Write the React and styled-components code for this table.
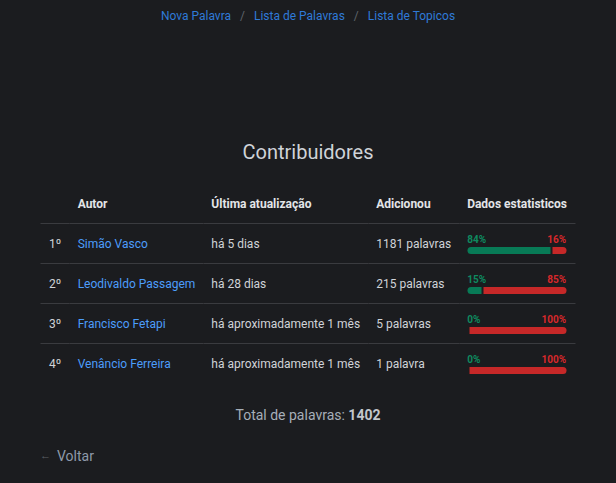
import React from 'react'
import styled, { createGlobalStyle } from 'styled-components'

const GlobalStyle = createGlobalStyle`
  html, body {
    margin: 0;
    padding: 0;
    background: #1b1c1f;
    font-family: Roboto, "Liberation Sans", Arial, sans-serif;
  }
`

const Page = styled.div`
  width: 616px;
  min-height: 483px;
  background: #1b1c1f;
  display: flex;
  flex-direction: column;
  align-items: center;
`

const Breadcrumb = styled.nav`
  display: flex;
  align-items: center;
  gap: 9px;
  padding: 7px 0 5px;
  font-size: 12px;
  line-height: 18px;
`

const Crumb = styled.a`
  color: #2f7ad8;
  text-decoration: none;
`

const Sep = styled.span`
  color: #5f646b;
`

const Title = styled.h2`
  margin: 110px 0 0;
  font-size: 20px;
  line-height: 24px;
  font-weight: 400;
  color: #cfd3d8;
`

const Table = styled.table`
  margin-top: 21px;
  width: 535px;
  border-collapse: collapse;
  font-size: 12px;
  transform: translateX(-0.5px);
`

const Th = styled.th`
  text-align: left;
  padding: 10px 8px;
  line-height: 18px;
  font-weight: 700;
  color: #e3e5e8;
  white-space: nowrap;
  border-bottom: 1px solid #3a3b3f;
`

const Tr = styled.tr`
  border-bottom: ${p => (p.$last ? 'none' : '1px solid #3a3b3f')};
`

const Td = styled.td`
  padding: 0 8px;
  height: 39px;
  line-height: 18px;
  color: #d0d3d8;
  white-space: nowrap;
  padding-left: ${p => p.$pl || '8px'};
`

const Author = styled.a`
  color: #4c9dfb;
  text-decoration: none;
`

const Stats = styled.div`
  display: flex;
  flex-direction: column;
  gap: 2px;
  width: 99px;
  margin-top: 1px;
`

const Labels = styled.div`
  display: flex;
  justify-content: space-between;
  font-size: 10px;
  line-height: 11px;
  font-weight: 700;
`

const Pct = styled.span`
  color: ${p => (p.$good ? '#0e8a5f' : '#d8282b')};
`

const Bar = styled.div`
  display: flex;
  gap: 2px;
  height: 7px;
`

const Seg = styled.div`
  height: 7px;
  background: ${p => (p.$good ? '#087a56' : '#c62828')};
  border-radius: ${p => (p.$good ? '4px 0 0 4px' : '0 4px 4px 0')};
`

const Total = styled.div`
  margin-top: 23px;
  font-size: 14px;
  line-height: 18px;
  color: #a6aeb8;

  b {
    color: #c3c7cc;
  }
`

const Back = styled.a`
  align-self: flex-start;
  margin: 23px 0 0 40px;
  display: flex;
  align-items: center;
  gap: 6px;
  font-size: 14px;
  line-height: 18px;
  color: #8e9aaa;
  text-decoration: none;
`

const Arrow = styled.span`
  color: #5e6268;
  font-size: 11px;
`

const rows = [
  { pos: '1º', name: 'Simão Vasco', when: 'há 5 dias', added: '1181 palavras', good: 84 },
  { pos: '2º', name: 'Leodivaldo Passagem', when: 'há 28 dias', added: '215 palavras', good: 15 },
  { pos: '3º', name: 'Francisco Fetapi', when: 'há aproximadamente 1 mês', added: '5 palavras', good: 0 },
  { pos: '4º', name: 'Venâncio Ferreira', when: 'há aproximadamente 1 mês', added: '1 palavra', good: 0 },
]

const StatBar = ({ good }) => (
  <Stats>
    <Labels>
      <Pct $good>{good}%</Pct>
      <Pct>{100 - good}%</Pct>
    </Labels>
    <Bar>
      <Seg $good style={{ width: `${good}%` }} />
      <Seg style={{ flex: 1 }} />
    </Bar>
  </Stats>
)

export default function App() {
  return (
    <Page>
      <GlobalStyle />
      <Breadcrumb>
        <Crumb href="#">Nova Palavra</Crumb>
        <Sep>/</Sep>
        <Crumb href="#">Lista de Palavras</Crumb>
        <Sep>/</Sep>
        <Crumb href="#">Lista de Topicos</Crumb>
      </Breadcrumb>

      <Title>Contribuidores</Title>

      <Table>
        <thead>
          <tr>
            <Th style={{ width: 14 }} />
            <Th>Autor</Th>
            <Th>Última atualização</Th>
            <Th>Adicionou</Th>
            <Th>Dados estatisticos</Th>
          </tr>
        </thead>
        <tbody>
          {rows.map((r, i) => (
            <Tr key={r.pos} $last={i === rows.length - 1}>
              <Td $pl="9px">{r.pos}</Td>
              <Td><Author href="#">{r.name}</Author></Td>
              <Td>{r.when}</Td>
              <Td>{r.added}</Td>
              <Td><StatBar good={r.good} /></Td>
            </Tr>
          ))}
        </tbody>
      </Table>

      <Total>
        Total de palavras: <b>1402</b>
      </Total>

      <Back href="#">
        <Arrow>←</Arrow>
        Voltar
      </Back>
    </Page>
  )
}
